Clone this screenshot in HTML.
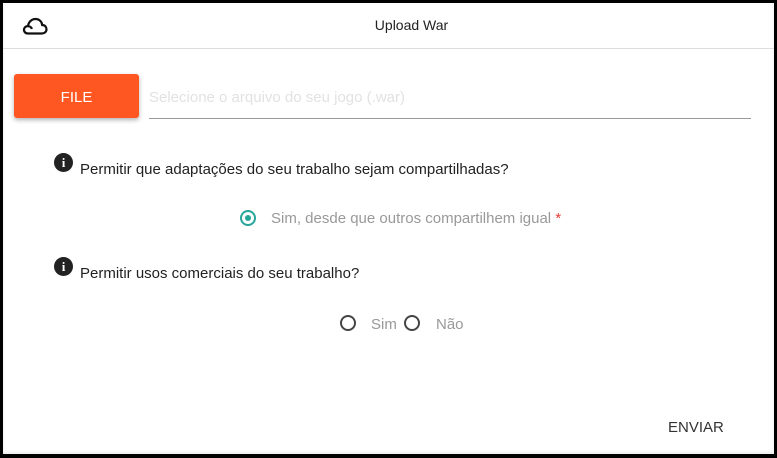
<!DOCTYPE html>
<html><head><style>
*{margin:0;padding:0;box-sizing:border-box}
body{width:777px;height:458px;background:#000;font-family:"Liberation Sans",sans-serif;position:relative;overflow:hidden}
.card{position:absolute;left:3px;top:3px;width:771px;height:451px;background:#fff;box-shadow:inset 0 -2px 3px rgba(0,0,0,.08)}
.a{position:absolute;white-space:nowrap}
.radio{position:absolute;width:16px;height:16px;border:2px solid #444;border-radius:50%}
.info{position:absolute;width:19px;height:19px;border-radius:50%;background:#222;color:#fff;font:bold 13px "Liberation Serif",serif;text-align:center;line-height:19px}
</style></head><body>
<div class="card">
<svg class="a" style="left:19px;top:13px" width="26" height="20" viewBox="0 0 26 20"><path d="M6 17.5 C2.5 17.5 1.5 14.5 2.2 12.5 C3 10.5 5 10 6 10.2 C6.5 6 9.5 3 13.5 3 C17.5 3 20 6 20.2 9 C22.8 9 24.5 11 24.5 13.3 C24.5 15.8 22.5 17.5 20 17.5 Z M6 10.2 C8 10.2 9.5 11.5 9.8 13" fill="none" stroke="#111" stroke-width="2.2"/></svg>
<div class="a" style="left:0;width:817px;text-align:center;top:14px;font-size:14px;color:#222">Upload War</div>
<div class="a" style="left:0;top:45px;width:771px;height:1px;background:#ddd"></div>
<div class="a" style="left:11px;top:71px;width:125px;height:44px;background:#ff5722;border-radius:3px;box-shadow:0 2px 5px rgba(0,0,0,.3);color:#fff;font-size:15px;text-align:center;line-height:48px">FILE</div>
<div class="a" style="left:146px;top:86px;font-size:15px;color:#e2e2e2">Selecione o arquivo do seu jogo (.war)</div>
<div class="a" style="left:146px;top:115px;width:602px;height:1px;background:#999"></div>
<div class="info" style="left:51px;top:150px">i</div>
<div class="a" style="left:77px;top:158px;font-size:15px;color:#222">Permitir que adaptações do seu trabalho sejam compartilhadas?</div>
<div class="radio" style="left:237px;top:207px;border-color:#26a69a"><div style="position:absolute;left:3px;top:3px;width:6px;height:6px;border-radius:50%;background:#26a69a"></div></div>
<div class="a" style="left:268px;top:207px;font-size:15px;color:#999">Sim, desde que outros compartilhem igual <span style="color:#e53935">*</span></div>
<div class="info" style="left:51px;top:254px">i</div>
<div class="a" style="left:77px;top:262px;font-size:15px;color:#222">Permitir usos comerciais do seu trabalho?</div>
<div class="radio" style="left:337px;top:312px"></div>
<div class="a" style="left:368px;top:313px;font-size:15px;color:#999">Sim</div>
<div class="radio" style="left:401px;top:312px"></div>
<div class="a" style="left:433px;top:313px;font-size:15px;color:#999">Não</div>
<div class="a" style="left:665px;top:416px;font-size:15px;color:#333">ENVIAR</div>
</div>
</body></html>
